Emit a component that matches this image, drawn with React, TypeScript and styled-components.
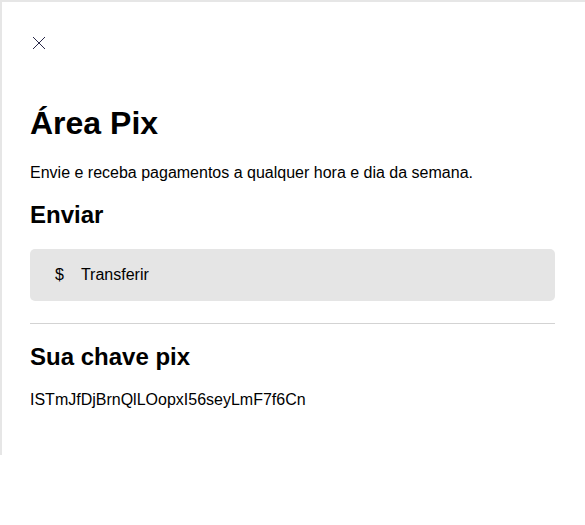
import React from "react";
import styled, { createGlobalStyle } from "styled-components";

const Global = createGlobalStyle`
  html, body { margin: 0; padding: 0; background: #fff; }
  body { font-family: "Liberation Sans", Arial, sans-serif; color: #000; }
  * { box-sizing: border-box; }
`;

const Panel = styled.div`
  width: 100%;
  height: 455px;
  border-top: 2px solid #e6e6e6;
  border-left: 2px solid #e6e6e6;
  padding: 28px 30px 30px 28px;
`;

const Header = styled.div`
  height: 54px;
  display: flex;
  align-items: flex-start;
`;

const CloseButton = styled.button`
  width: 17px;
  height: 26px;
  padding: 0;
  border: none;
  background: transparent;
  display: flex;
  align-items: center;
  justify-content: center;
  color: #2a2a4a;
  cursor: pointer;
`;

const Title = styled.h1`
  font-size: 32px;
  font-weight: 700;
  margin: 21.44px 0;
`;

const Text = styled.p`
  font-size: 16px;
  margin: 16px 0;
`;

const SectionTitle = styled.h2`
  font-size: 24px;
  font-weight: 700;
  margin: 19.5px 0;
`;

const ActionButton = styled.button`
  width: 100%;
  height: 52px;
  display: flex;
  align-items: center;
  gap: 17px;
  padding: 0 0 0 25px;
  border: none;
  border-radius: 5px;
  background: #e5e5e5;
  font-family: inherit;
  font-size: 16px;
  color: #000;
  text-align: left;
  cursor: pointer;
`;

const Divider = styled.hr`
  margin: 22px 0 0;
  border: none;
  border-top: 1px solid #d3d3d3;
  height: 0;
`;

export default function App() {
  return (
    <>
      <Global />
      <Panel>
        <Header>
          <CloseButton aria-label="Fechar">
            <svg width="14" height="14" viewBox="0 0 14 14" fill="none">
              <path d="M1 1L13 13M13 1L1 13" stroke="currentColor" strokeWidth="1" />
            </svg>
          </CloseButton>
        </Header>
        <Title>Área Pix</Title>
        <Text>Envie e receba pagamentos a qualquer hora e dia da semana.</Text>
        <SectionTitle>Enviar</SectionTitle>
        <ActionButton>
          <span>$</span>
          <span>Transferir</span>
        </ActionButton>
        <Divider />
        <SectionTitle>Sua chave pix</SectionTitle>
        <Text>ISTmJfDjBrnQlLOopxI56seyLmF7f6Cn</Text>
      </Panel>
    </>
  );
}
